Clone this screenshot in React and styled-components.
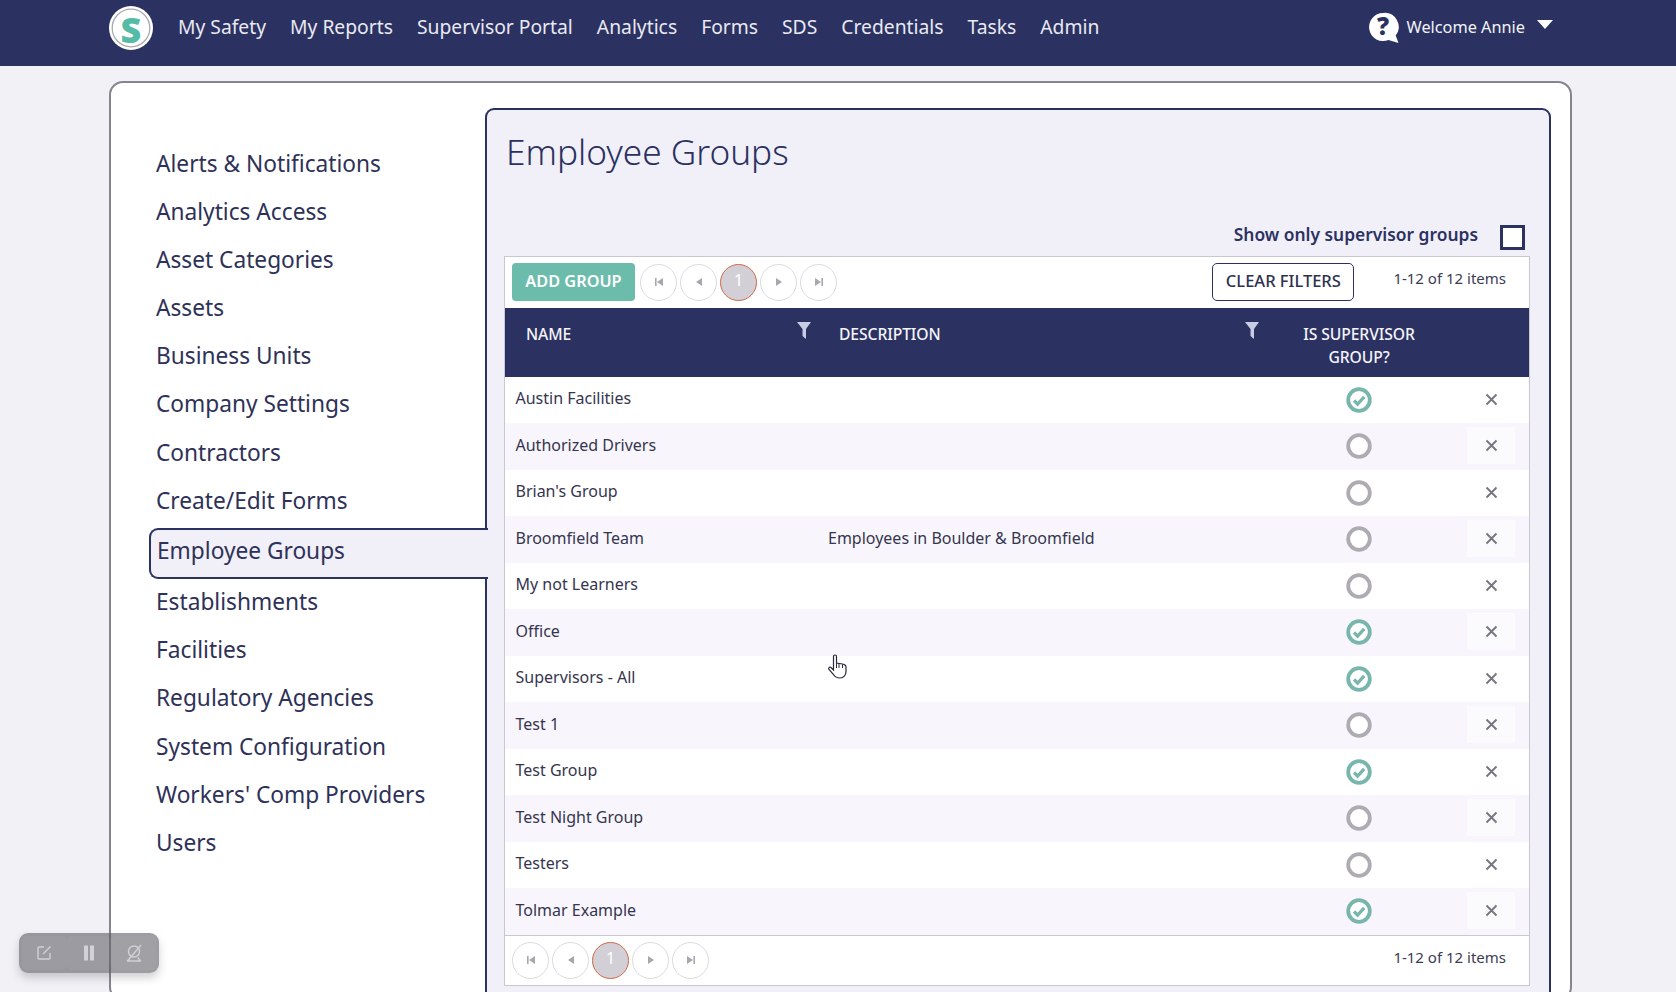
import React from 'react';
import styled, { createGlobalStyle } from 'styled-components';

const GlobalStyle = createGlobalStyle`
  html, body {
    margin: 0;
    padding: 0;
    background: #f1f1f6;
    font-family: 'Noto Sans', 'Open Sans', sans-serif;
    color: #2b3262;
  }
  * { box-sizing: border-box; }
`;

const Page = styled.div`
  height: 100vh;
  overflow: hidden;
`;

const TopBar = styled.header`
  height: 66px;
  background: #2b3262;
  display: flex;
  align-items: center;
  padding: 0 123px 10px 109px;
`;

const Logo = styled.svg`
  width: 44px;
  height: 44px;
  margin-right: 25px;
  flex: none;
  overflow: visible;
`;

const NavList = styled.nav`
  display: flex;
  gap: 24px;
  flex: 1;
  margin-top: -2px;
`;

const NavItem = styled.a`
  color: #e9e9f1;
  font-size: 19.3px;
  line-height: 26px;
  white-space: nowrap;
`;

const UserMenu = styled.div`
  display: flex;
  align-items: center;
  color: #f2f2f7;
  font-size: 16.3px;
  margin-top: -2px;
`;

const HelpIcon = styled.svg`
  width: 30px;
  height: 30px;
  margin-right: 8px;
  margin-top: 2px;
  overflow: visible;
`;

const Caret = styled.span`
  width: 0;
  height: 0;
  margin-left: 12px;
  margin-top: -6px;
  border-left: 8.5px solid transparent;
  border-right: 8.5px solid transparent;
  border-top: 9px solid #fff;
`;

const Card = styled.main`
  margin: 15px 0 0 109px;
  width: 1463px;
  height: 920px;
  background: #fff;
  border: 2px solid #85848f;
  border-radius: 14px;
  padding: 25px 19px 0 0;
  display: flex;
`;

const SideMenu = styled.ul`
  list-style: none;
  margin: 0;
  padding: 32px 0 0 39px;
  width: 374px;
  flex: none;
`;

const SideItem = styled.li`
  height: ${p => (p.$active ? '51px' : '48.1px')};
  margin: ${p => (p.$active ? '3px -3px -0.5px -1px' : '0')};
  padding-left: 6px;
  line-height: ${p => (p.$active ? '41px' : '48px')};
  font-size: 22.7px;
  color: #2e3158;
  white-space: nowrap;
  position: relative;
  z-index: 1;
  ${p => p.$active && `
    background: #f1eff7;
    border: 2px solid #2b3262;
    border-right: 0;
    border-radius: 9px 0 0 9px;
  `}
`;

const Panel = styled.section`
  flex: 1;
  min-width: 0;
  background: #f1f0f8;
  border: 2px solid #2b3262;
  border-radius: 9px 9px 0 0;
  padding: 0 19px 0 17px;
`;

const Title = styled.h1`
  margin: 0;
  padding: 17px 0 0 2px;
  height: 115px;
  font-size: 35.2px;
  line-height: 48px;
  font-weight: 300;
  color: #2b3262;
`;

const FilterRow = styled.div`
  display: flex;
  justify-content: flex-end;
  align-items: flex-start;
  height: 31px;
  padding-right: 5px;
`;

const FilterLabel = styled.label`
  font-size: 17.4px;
  font-weight: 600;
  color: #2b3262;
  margin: -3px 22px 0 0;
`;

const Checkbox = styled.span`
  width: 25px;
  height: 25px;
  background: #fff;
  border: 3px solid #2b3262;
`;

const Grid = styled.div`
  background: #fff;
  border: 1px solid #c9c8d2;
`;

const Toolbar = styled.div`
  height: 50.500px;
  display: flex;
  align-items: center;
  padding: 0 23px 0 7px;
  gap: 5px;
`;

const AddButton = styled.button`
  width: 123px;
  height: 38px;
  background: #6cbcab;
  color: #fff;
  border: 0;
  border-radius: 4px;
  font-family: inherit;
  font-size: 16.3px;
  font-weight: 600;
  padding: 0 0 2px;
`;

const Pager = styled.div`
  display: flex;
  gap: 3px;
  align-items: center;
`;

const PageButton = styled.span`
  width: 37px;
  height: 37px;
  border-radius: 50%;
  display: flex;
  align-items: center;
  justify-content: center;
  color: #fff;
  font-size: 16px;
  background: ${p => (p.$active ? '#d2d0d6' : '#fff')};
  border: 1px solid ${p => (p.$active ? '#cf6a45' : '#dcdae0')};
  padding-bottom: ${p => (p.$active ? '5px' : '0')};
`;

const ClearButton = styled.button`
  width: 142px;
  height: 38px;
  margin-left: auto;
  background: #fff;
  border: 1.5px solid #2b3262;
  border-radius: 5px;
  font-family: inherit;
  font-size: 16.5px;
  font-weight: 500;
  color: #2e3052;
  padding: 0 0 3px;
`;

const ItemCount = styled.span`
  margin: ${p => (p.$bottom ? '-6px 0 0 auto' : '-8px 0 0 34px')};
  font-size: 15px;
  color: #3c3c55;
  white-space: nowrap;
`;

const columns = '323px 441px 180px minmax(0, 1fr)';

const HeadRow = styled.div`
  height: 69px;
  background: #2b3262;
  color: #f4f4f8;
  font-size: 15.7px;
  font-weight: 500;
  letter-spacing: -0.1px;
  line-height: 23px;
  display: grid;
  grid-template-columns: ${columns};
`;

const HeadCell = styled.div`
  padding: 15px 0 0 ${p => p.$pad || 0}px;
  text-align: ${p => (p.$center ? 'center' : 'left')};
  position: relative;
`;

const FilterMark = styled.svg`
  position: absolute;
  top: 14px;
  right: ${p => p.$right}px;
  width: 14px;
  height: 17px;
`;

const Row = styled.div`
  height: 46.5px;
  display: grid;
  grid-template-columns: ${columns};
  align-items: center;
  font-size: 16px;
  color: #35354f;
  background: ${p => (p.$even ? '#f8f6fc' : '#fff')};
`;

const NameCell = styled.div`
  padding: 0 0 3px 10.5px;
`;

const DescCell = styled.div`
  padding-bottom: 3px;
`;

const StatusCell = styled.div`
  display: flex;
  justify-content: center;
`;

const DeleteCell = styled.div`
  display: flex;
  justify-content: center;
  align-items: center;
  width: 48px;
  height: 37px;
  margin: -1px 0 0 18px;
  background: ${p => (p.$even ? '#fbfafd' : 'transparent')};
`;

const Footer = styled.div`
  height: 50px;
  border-top: 1px solid #c9c8d2;
  display: flex;
  align-items: center;
  padding: 0 23px 0 7px;
`;

const Recorder = styled.div`
  position: fixed;
  left: 19px;
  top: 933px;
  width: 140px;
  height: 40px;
  border-radius: 9px;
  background: rgba(93, 91, 100, 0.6);
  box-shadow: 0 5px 9px rgba(90, 90, 100, 0.28);
  display: flex;
  align-items: center;
  padding: 0 3px;
`;

const RecorderSlot = styled.span`
  flex: 1;
  height: 34px;
  display: flex;
  align-items: center;
  justify-content: center;
  color: #d2d1d6;
  border-radius: 5px;
  background: rgba(255, 255, 255, 0.03);
`;

const HandCursor = styled.svg`
  position: fixed;
  left: 827px;
  top: 654px;
  width: 21px;
  height: 25px;
`;

const menu = [
  'Alerts & Notifications', 'Analytics Access', 'Asset Categories', 'Assets', 'Business Units',
  'Company Settings', 'Contractors', 'Create/Edit Forms', 'Employee Groups', 'Establishments',
  'Facilities', 'Regulatory Agencies', 'System Configuration', "Workers' Comp Providers", 'Users',
];

const nav = ['My Safety', 'My Reports', 'Supervisor Portal', 'Analytics', 'Forms', 'SDS', 'Credentials', 'Tasks', 'Admin'];

const groups = [
  ['Austin Facilities', '', true],
  ['Authorized Drivers', '', false],
  ["Brian's Group", '', false],
  ['Broomfield Team', 'Employees in Boulder & Broomfield', false],
  ['My not Learners', '', false],
  ['Office', '', true],
  ['Supervisors - All', '', true],
  ['Test 1', '', false],
  ['Test Group', '', true],
  ['Test Night Group', '', false],
  ['Testers', '', false],
  ['Tolmar Example', '', true],
];

const Glyph = ({ kind }) => {
  const fill = '#a8a6ae';
  return (
    <svg width="12" height="12" viewBox="0 0 12 12">
      {kind === 'first' && <path d="M2 2h1.600v8H2zM10 2v8L4 6z" fill={fill} />}
      {kind === 'prev' && <path d="M9 2v8L3 6z" fill={fill} />}
      {kind === 'next' && <path d="M3 2v8l6-4z" fill={fill} />}
      {kind === 'last' && <path d="M10 2H8.400v8H10zM2 2v8l6-4z" fill={fill} />}
    </svg>
  );
};

const Paging = () => (
  <Pager>
    <PageButton><Glyph kind="first" /></PageButton>
    <PageButton><Glyph kind="prev" /></PageButton>
    <PageButton $active>1</PageButton>
    <PageButton><Glyph kind="next" /></PageButton>
    <PageButton><Glyph kind="last" /></PageButton>
  </Pager>
);

const Status = ({ on }) => (
  <svg width="26" height="26" viewBox="0 0 26 26">
    <circle cx="13" cy="13" r="10.800" fill="#fff" stroke={on ? '#78b5ad' : '#aeacb2'} strokeWidth="3.800" />
    {on && <path d="M8 13.500l3.600 3.600 6.600-7.200" fill="none" stroke="#78b5ad" strokeWidth="3.200" />}
  </svg>
);

const Cross = () => (
  <svg width="13" height="13" viewBox="0 0 13 13">
    <path d="M1.500 1.500l10 10M11.500 1.500l-10 10" stroke="#77757e" strokeWidth="1.900" />
  </svg>
);

const Funnel = ({ right }) => (
  <FilterMark $right={right} viewBox="0 0 14 17">
    <path d="M0 0h14L9 7v10L5.500 14V7z" fill="#c9cce2" />
  </FilterMark>
);

const App = () => (
  <Page>
    <GlobalStyle />
    <TopBar>
      <Logo viewBox="0 0 44 44">
        <circle cx="22" cy="22" r="22" fill="#fff" />
        <circle cx="22" cy="22" r="18.800" fill="#fff" stroke="#a9a9b3" strokeWidth="1.300" />
        <text x="22" y="36.500" textAnchor="middle" fontSize="36" fontWeight="800" fill="#55bba6" fontFamily="Open Sans">S</text>
      </Logo>
      <NavList>
        {nav.map(item => <NavItem key={item}>{item}</NavItem>)}
      </NavList>
      <UserMenu>
        <HelpIcon viewBox="0 0 30 30">
          <path d="M14 0a14 14 0 1 0 5.500 26.900L29.500 30l-2.800-7.500A14 14 0 0 0 14 0z" fill="#fff" />
          <text x="14" y="21.500" textAnchor="middle" fontSize="24" fontWeight="800" fill="#2b3262" fontFamily="Open Sans">?</text>
        </HelpIcon>
        Welcome Annie
        <Caret />
      </UserMenu>
    </TopBar>
    <Card>
      <SideMenu>
        {menu.map(item => (
          <SideItem key={item} $active={item === 'Employee Groups'}>{item}</SideItem>
        ))}
      </SideMenu>
      <Panel>
        <Title>Employee Groups</Title>
        <FilterRow>
          <FilterLabel>Show only supervisor groups</FilterLabel>
          <Checkbox />
        </FilterRow>
        <Grid>
          <Toolbar>
            <AddButton>ADD GROUP</AddButton>
            <Paging />
            <ClearButton>CLEAR FILTERS</ClearButton>
            <ItemCount>1-12 of 12 items</ItemCount>
          </Toolbar>
          <HeadRow>
            <HeadCell $pad={21}>NAME<Funnel right={17} /></HeadCell>
            <HeadCell $pad={11}>DESCRIPTION<Funnel right={10} /></HeadCell>
            <HeadCell $center>IS SUPERVISOR<br />GROUP?</HeadCell>
            <HeadCell />
          </HeadRow>
          {groups.map(([name, desc, on], i) => (
            <Row key={name} $even={i % 2 === 1}>
              <NameCell>{name}</NameCell>
              <DescCell>{desc}</DescCell>
              <StatusCell><Status on={on} /></StatusCell>
              <DeleteCell $even={i % 2 === 1}><Cross /></DeleteCell>
            </Row>
          ))}
          <Footer>
            <Paging />
            <ItemCount $bottom>1-12 of 12 items</ItemCount>
          </Footer>
        </Grid>
      </Panel>
    </Card>
    <Recorder>
      <RecorderSlot>
        <svg width="18" height="18" viewBox="0 0 18 18" fill="none" stroke="currentColor" strokeWidth="1.400">
          <path d="M9 3H4a1 1 0 0 0-1 1v10a1 1 0 0 0 1 1h10a1 1 0 0 0 1-1V9M8 10l7.500-7.500" />
        </svg>
      </RecorderSlot>
      <RecorderSlot>
        <svg width="12" height="16" viewBox="0 0 12 16"><path d="M1 .5h4v15H1zM7 .5h4v15H7z" fill="currentColor" /></svg>
      </RecorderSlot>
      <RecorderSlot>
        <svg width="20" height="20" viewBox="0 0 20 20" fill="none" stroke="currentColor" strokeWidth="1.400">
          <circle cx="10" cy="8.500" r="5.500" /><path d="M3 18h14M6 14.500c-.5 1.500-1.500 2.500-3 3.500M14 14.500c.5 1.500 1.500 2.500 3 3.500M3.500 18L17 2" />
        </svg>
      </RecorderSlot>
    </Recorder>
    <HandCursor viewBox="0 0 21 25">
      <path d="M6.500 14V2.500a1.500 1.500 0 0 1 3 0V9l6 1c2 .4 3.500 1.500 3.500 3v4.500c0 3-2 6.500-6 6.500-3 0-5-1-6.500-3.500L2 15.500c-1-1.500 .5-3 2-2l2.500 2.500z" fill="#fff" stroke="#2a2a38" strokeWidth="1.200" />
      <path d="M12 9.500V14M15.500 10.500V14M9.500 9v5" stroke="#2a2a38" strokeWidth="1" fill="none" />
    </HandCursor>
  </Page>
);

export default App;
